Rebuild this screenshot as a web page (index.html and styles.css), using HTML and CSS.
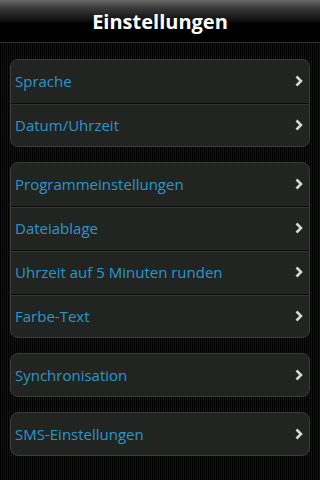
FILE: index.html
```html
<!DOCTYPE html>
<html>
<head>
<meta charset="utf-8">
<link rel="stylesheet" href="styles.css">
</head>
<body>
<div class="header">Einstellungen</div>
<div class="content">
  <div class="group">
    <div class="row"><span>Sprache</span><svg class="chev" viewBox="0 0 8 12"><path d="M1.5 1.5 L6 6 L1.5 10.5"/></svg></div>
    <div class="row"><span>Datum/Uhrzeit</span><svg class="chev" viewBox="0 0 8 12"><path d="M1.5 1.5 L6 6 L1.5 10.5"/></svg></div>
  </div>
  <div class="group">
    <div class="row"><span>Programmeinstellungen</span><svg class="chev" viewBox="0 0 8 12"><path d="M1.5 1.5 L6 6 L1.5 10.5"/></svg></div>
    <div class="row"><span>Dateiablage</span><svg class="chev" viewBox="0 0 8 12"><path d="M1.5 1.5 L6 6 L1.5 10.5"/></svg></div>
    <div class="row"><span>Uhrzeit auf 5 Minuten runden</span><svg class="chev" viewBox="0 0 8 12"><path d="M1.5 1.5 L6 6 L1.5 10.5"/></svg></div>
    <div class="row"><span>Farbe-Text</span><svg class="chev" viewBox="0 0 8 12"><path d="M1.5 1.5 L6 6 L1.5 10.5"/></svg></div>
  </div>
  <div class="group">
    <div class="row"><span>Synchronisation</span><svg class="chev" viewBox="0 0 8 12"><path d="M1.5 1.5 L6 6 L1.5 10.5"/></svg></div>
  </div>
  <div class="group">
    <div class="row"><span>SMS-Einstellungen</span><svg class="chev" viewBox="0 0 8 12"><path d="M1.5 1.5 L6 6 L1.5 10.5"/></svg></div>
  </div>
</div>
</body>
</html>
```
FILE: styles.css
```css
html, body {
  margin: 0;
  padding: 0;
  height: 100%;
}
body {
  width: 320px;
  height: 480px;
  overflow: hidden;
  background: repeating-linear-gradient(to right, #000 0px, #000 1px, #141414 1px, #141414 2px);
  font-family: "Open Sans", "Noto Sans", sans-serif;
}
.header {
  height: 42px;
  border-bottom: 1px solid #2e2e2e;
  background: linear-gradient(to bottom, #6a6a6a 0px, #3a3a3a 8px, #111 20px, #000 24px, #000 42px);
  color: #fff;
  font-weight: bold;
  font-size: 20px;
  text-align: center;
  line-height: 44px;
}
.content {
  display: flex;
  flex-direction: column;
  gap: 15px;
  padding: 16px 10px 0 10px;
}
.group {
  background: #222422;
  border: 1px solid #3a3b3a;
  border-radius: 8px;
  box-sizing: border-box;
  overflow: hidden;
}
.row {
  height: 44px;
  display: flex;
  align-items: center;
  justify-content: space-between;
  padding: 0 6px 1px 4px;
  box-sizing: border-box;
  color: #2a97cc;
  font-size: 15px;
}
.row:first-child {
  margin-top: -1px;
}
.row:last-child {
  margin-bottom: -1px;
}
.row + .row {
  border-top: 1px solid #0c0c0c;
  box-shadow: inset 0 1px 0 #333;
}
.chev {
  width: 8px;
  height: 12px;
  fill: none;
  stroke: #d8d8d8;
  stroke-width: 2.5;
  stroke-linecap: butt;
  stroke-linejoin: miter;
}
```
